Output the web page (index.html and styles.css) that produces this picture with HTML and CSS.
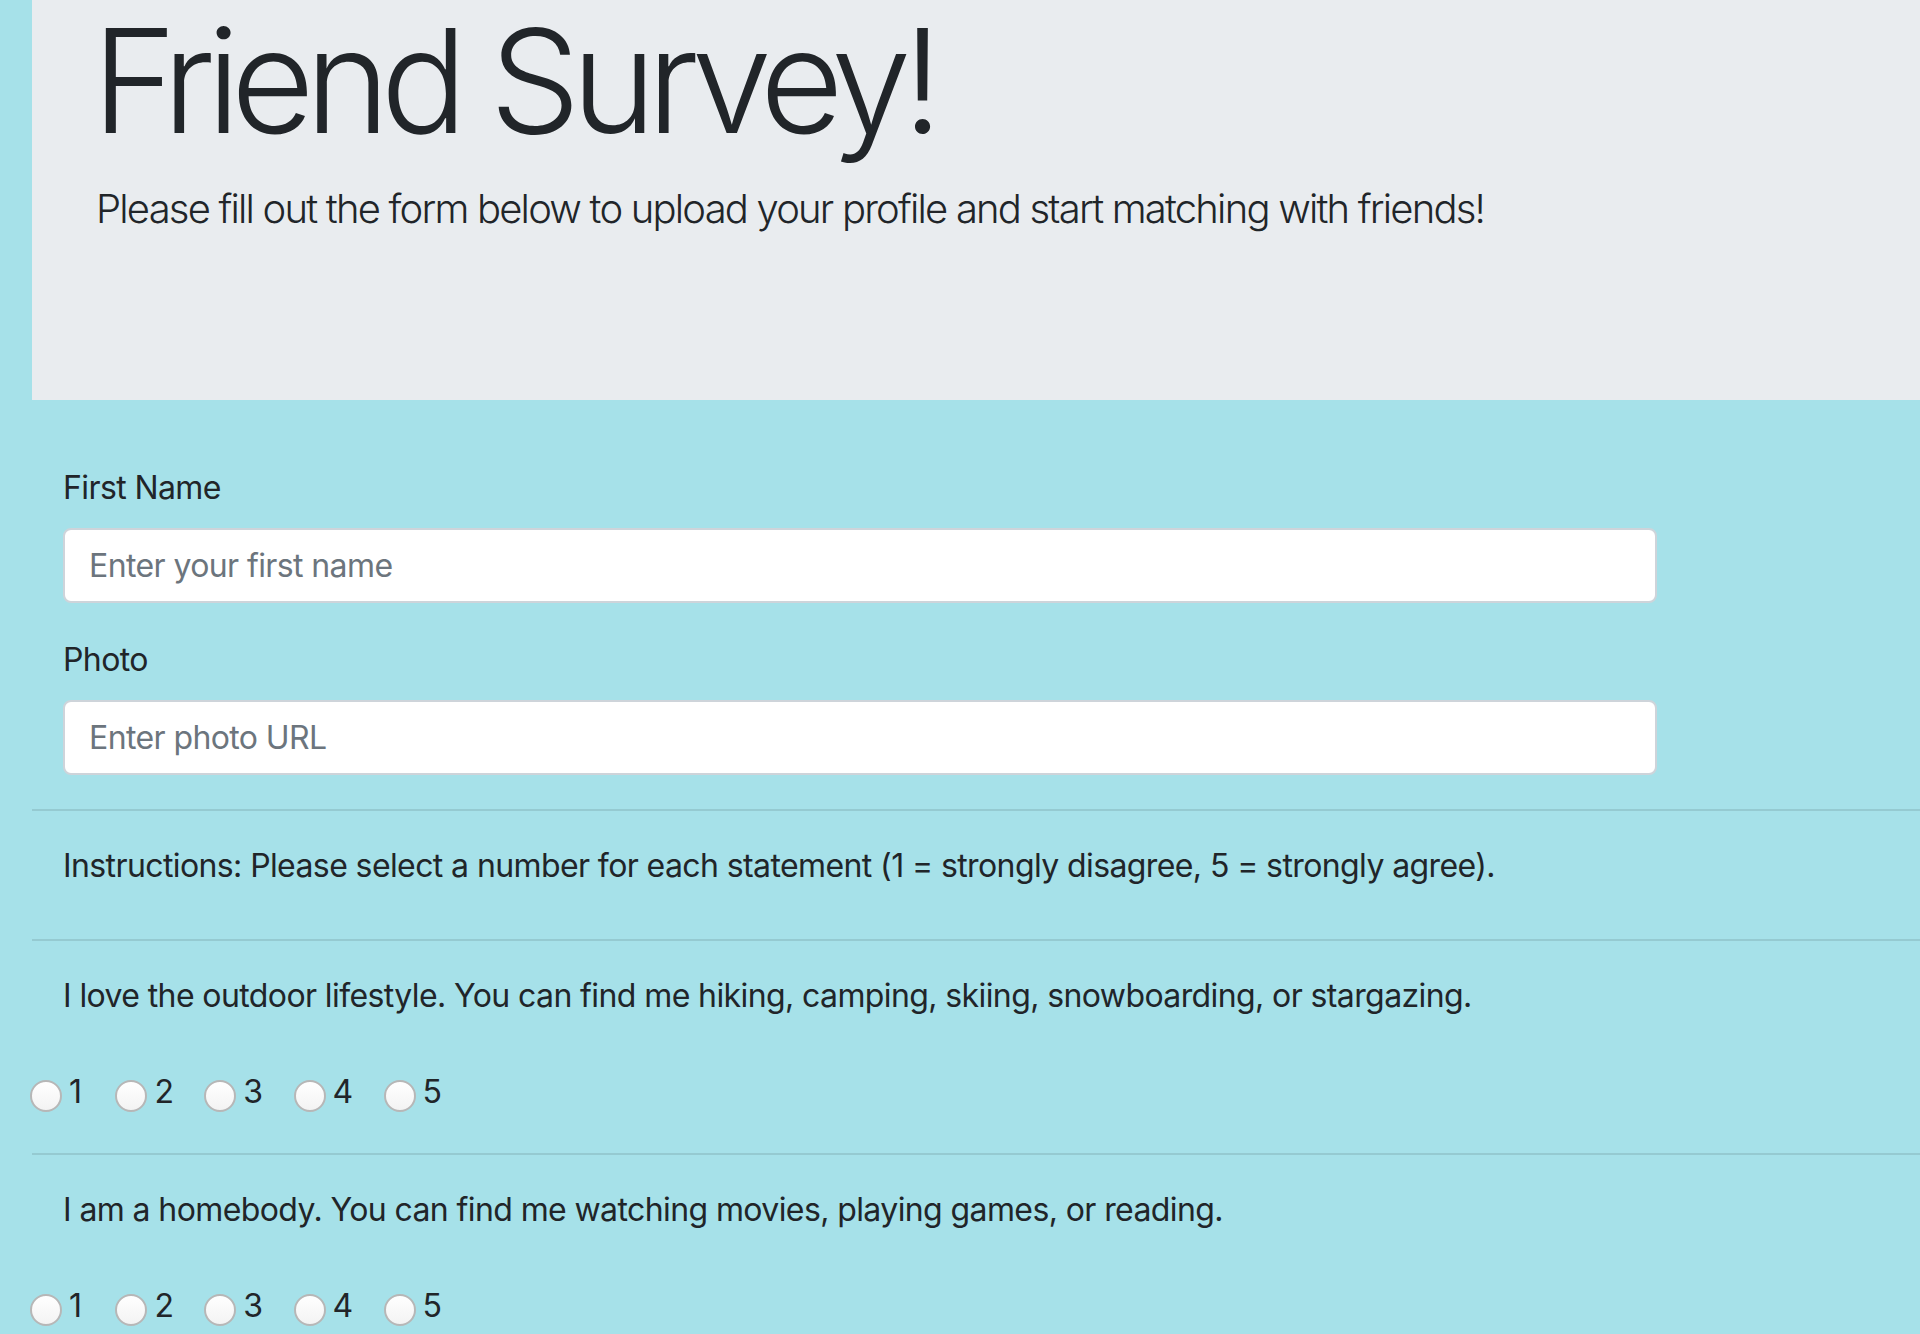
FILE: index.html
```html
<!DOCTYPE html>
<html lang="en">
<head>
<meta charset="utf-8">
<title>Friend Survey</title>
<link rel="stylesheet" href="styles.css">
</head>
<body>
<div class="page">
  <header class="jumbotron">
    <h1 class="title">Friend Survey!</h1>
    <p class="lead">Please fill out the form below to upload your profile and start matching with friends!</p>
  </header>
  <form class="survey">
    <div class="fields">
      <div class="field">
        <label class="field-label" for="name">First Name</label>
        <input class="field-input" id="name" type="text" placeholder="Enter your first name">
      </div>
      <div class="field">
        <label class="field-label" for="photo">Photo</label>
        <input class="field-input" id="photo" type="text" placeholder="Enter photo URL">
      </div>
    </div>
    <hr class="rule">
    <p class="text instructions">Instructions: Please select a number for each statement (1 = strongly disagree, 5 = strongly agree).</p>
    <hr class="rule">
    <div class="question">
      <p class="text statement">I love the outdoor lifestyle. You can find me hiking, camping, skiing, snowboarding, or stargazing.</p>
      <div class="choices">
        <label class="choice"><input class="radio" type="radio" name="q1" value="1"><span class="num">1</span></label>
        <label class="choice"><input class="radio" type="radio" name="q1" value="2"><span class="num">2</span></label>
        <label class="choice"><input class="radio" type="radio" name="q1" value="3"><span class="num">3</span></label>
        <label class="choice"><input class="radio" type="radio" name="q1" value="4"><span class="num">4</span></label>
        <label class="choice"><input class="radio" type="radio" name="q1" value="5"><span class="num">5</span></label>
      </div>
    </div>
    <hr class="rule">
    <div class="question">
      <p class="text statement">I am a homebody. You can find me watching movies, playing games, or reading.</p>
      <div class="choices">
        <label class="choice"><input class="radio" type="radio" name="q2" value="1"><span class="num">1</span></label>
        <label class="choice"><input class="radio" type="radio" name="q2" value="2"><span class="num">2</span></label>
        <label class="choice"><input class="radio" type="radio" name="q2" value="3"><span class="num">3</span></label>
        <label class="choice"><input class="radio" type="radio" name="q2" value="4"><span class="num">4</span></label>
        <label class="choice"><input class="radio" type="radio" name="q2" value="5"><span class="num">5</span></label>
      </div>
    </div>
  </form>
</div>
</body>
</html>
```

FILE: styles.css
```css
html, body {
  margin: 0;
  padding: 0;
}

body {
  background: #a6e1e9;
  color: #212529;
  font-family: Inter, "Liberation Sans", sans-serif;
  font-size: 32px;
  line-height: 48px;
  letter-spacing: -0.6px;
  overflow: hidden;
}

.page {
  margin-left: 32px;
}

.jumbotron {
  background: #e9ecef;
  height: 400px;
  box-sizing: border-box;
  padding: 1px 64px 0 64px;
}

.title {
  margin: 0 0 0 -4px;
  font-size: 144px;
  font-weight: 300;
  line-height: 160px;
  letter-spacing: -9.2px;
}

.lead {
  margin: 18px 0 0 0;
  font-size: 40px;
  font-weight: 300;
  line-height: 60px;
  letter-spacing: -1.8px;
}

.survey {
  margin: 0;
}

.fields {
  padding: 64px 0 0 31px;
}

.field {
  margin-bottom: 33px;
}

.field:last-child {
  margin-bottom: 0;
}

.field-label {
  display: block;
  margin-bottom: 16px;
}

.field-input {
  display: block;
  box-sizing: border-box;
  width: 1594px;
  height: 75px;
  padding: 0 24px;
  border: 2px solid #ced4da;
  border-radius: 8px;
  background: #fff;
  font-family: inherit;
  font-size: 32px;
  letter-spacing: inherit;
  color: #495057;
  outline: none;
}

.field-input::placeholder {
  color: #6c757d;
}

.rule {
  margin: 34px 0 31px 0;
  border: 0;
  border-top: 2px solid rgba(0, 0, 0, 0.1);
  height: 0;
}

.text {
  margin: 0;
  padding-left: 31px;
}

.instructions {
  margin-bottom: 49px;
}

.statement {
  margin-bottom: 48px;
}

.choices {
  display: flex;
  margin-left: -2px;
  margin-bottom: 37px;
}

.choice {
  display: flex;
  align-items: flex-start;
  margin-right: 31px;
}

.choice:first-child {
  margin-right: 34px;
}

.radio {
  appearance: none;
  -webkit-appearance: none;
  box-sizing: border-box;
  width: 32px;
  height: 32px;
  margin: 12px 7px 0 0;
  border: 2px solid #b7b7b7;
  border-radius: 50%;
  background: linear-gradient(#ffffff, #f3f3f3);
}
```
